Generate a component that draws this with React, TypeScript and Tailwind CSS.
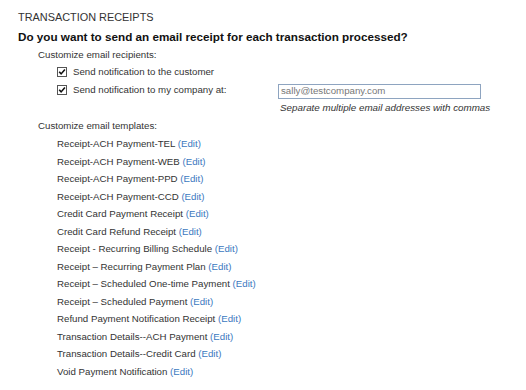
import React from "react";

const templates = [
  "Receipt-ACH Payment-TEL",
  "Receipt-ACH Payment-WEB",
  "Receipt-ACH Payment-PPD",
  "Receipt-ACH Payment-CCD",
  "Credit Card Payment Receipt",
  "Credit Card Refund Receipt",
  "Receipt - Recurring Billing Schedule",
  "Receipt \u2013 Recurring Payment Plan",
  "Receipt \u2013 Scheduled One-time Payment",
  "Receipt \u2013 Scheduled Payment",
  "Refund Payment Notification Receipt",
  "Transaction Details--ACH Payment",
  "Transaction Details--Credit Card",
  "Void Payment Notification",
];

function CheckMark() {
  return (
    <svg width="10" height="10" viewBox="0 0 10 10" className="shrink-0">
      <rect x="0.5" y="0.5" width="9" height="9" fill="#fff" stroke="#555" />
      <path d="M2.2 4.8 L4.1 6.9 L7.9 2.4" fill="none" stroke="#111" strokeWidth="1.6" />
    </svg>
  );
}

export default function App() {
  return (
    <div className="min-h-[390px] w-[526px] bg-white pl-[18px] pt-[10px] font-['Liberation_Sans',Arial,sans-serif] text-[#333]">
      <div className="h-[14px] text-[10.9px] leading-[14px]">TRANSACTION RECEIPTS</div>
      <div className="mt-[6px] h-[14px] text-[11.7px] font-bold leading-[14px] text-[#111]">
        Do you want to send an email receipt for each transaction processed?
      </div>

      <div className="pl-[20px] text-[9.7px]">
        <div className="mt-[4px] h-[14px] leading-[14px]">Customize email recipients:</div>

        <div className="mt-[1px] pl-[19px]">
          <div className="flex h-[18px] items-center gap-[6px]">
            <CheckMark />
            <span>Send notification to the customer</span>
          </div>
          <div className="flex h-[18px] items-center">
            <div className="flex w-[221px] items-center gap-[6px]">
              <CheckMark />
              <span>Send notification to my company at:</span>
            </div>
            <div className="mt-[2px] flex h-[15px] w-[203px] items-center border border-[#8ea4c0] px-[2px] text-[#777]">
              sally@testcompany.com
            </div>
          </div>
          <div className="mt-[2px] h-[14px] pl-[223px] text-[9.8px] italic leading-[14px]">
            Separate multiple email addresses with commas
          </div>
        </div>

        <div className="mt-[4px] h-[14px] leading-[14px]">Customize email templates:</div>

        <div className="mt-[2.25px] pl-[19px]">
          {templates.map((t) => (
            <div key={t} className="h-[17.5px] leading-[17.5px]">
              {t} <span className="text-[#3b78c0]">(Edit)</span>
            </div>
          ))}
        </div>
      </div>
    </div>
  );
}
